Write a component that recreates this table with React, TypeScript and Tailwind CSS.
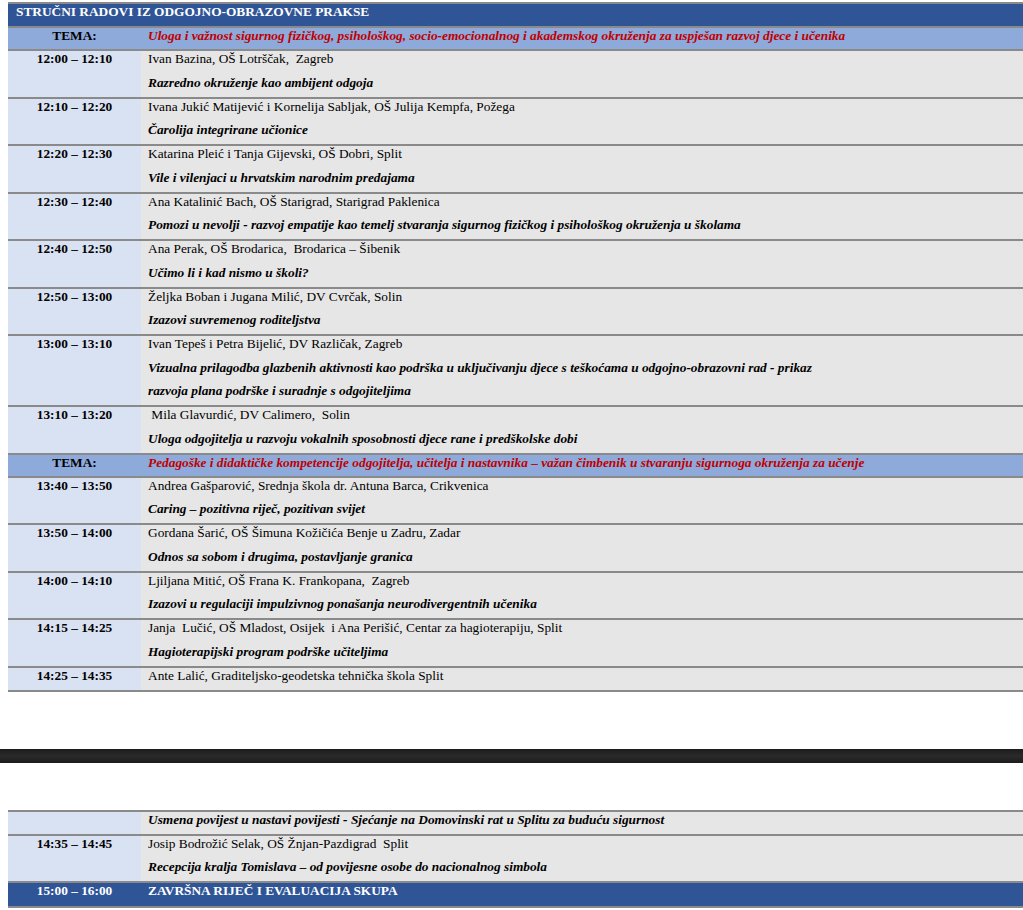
import React from "react";

type Row =
  | { kind: "header"; text: string }
  | { kind: "tema"; text: string }
  | { kind: "entry"; time: string; lines: string[]; titles: string[] }
  | { kind: "final"; time: string; text: string };

const table1: Row[] = [
  { kind: "header", text: "STRUČNI RADOVI IZ ODGOJNO-OBRAZOVNE PRAKSE" },
  {
    kind: "tema",
    text: "Uloga i važnost sigurnog fizičkog, psihološkog, socio-emocionalnog i akademskog okruženja za uspješan razvoj djece i učenika",
  },
  { kind: "entry", time: "12:00 – 12:10", lines: ["Ivan Bazina, OŠ Lotrščak,  Zagreb"], titles: ["Razredno okruženje kao ambijent odgoja"] },
  { kind: "entry", time: "12:10 – 12:20", lines: ["Ivana Jukić Matijević i Kornelija Sabljak, OŠ Julija Kempfa, Požega"], titles: ["Čarolija integrirane učionice"] },
  { kind: "entry", time: "12:20 – 12:30", lines: ["Katarina Pleić i Tanja Gijevski, OŠ Dobri, Split"], titles: ["Vile i vilenjaci u hrvatskim narodnim predajama"] },
  {
    kind: "entry",
    time: "12:30 – 12:40",
    lines: ["Ana Katalinić Bach, OŠ Starigrad, Starigrad Paklenica"],
    titles: ["Pomozi u nevolji - razvoj empatije kao temelj stvaranja sigurnog fizičkog i psihološkog okruženja u školama"],
  },
  { kind: "entry", time: "12:40 – 12:50", lines: ["Ana Perak, OŠ Brodarica,  Brodarica – Šibenik"], titles: ["Učimo li i kad nismo u školi?"] },
  { kind: "entry", time: "12:50 – 13:00", lines: ["Željka Boban i Jugana Milić, DV Cvrčak, Solin"], titles: ["Izazovi suvremenog roditeljstva"] },
  {
    kind: "entry",
    time: "13:00 – 13:10",
    lines: ["Ivan Tepeš i Petra Bijelić, DV Različak, Zagreb"],
    titles: [
      "Vizualna prilagodba glazbenih aktivnosti kao podrška u uključivanju djece s teškoćama u odgojno-obrazovni rad - prikaz",
      "razvoja plana podrške i suradnje s odgojiteljima",
    ],
  },
  {
    kind: "entry",
    time: "13:10 – 13:20",
    lines: [" Mila Glavurdić, DV Calimero,  Solin"],
    titles: ["Uloga odgojitelja u razvoju vokalnih sposobnosti djece rane i predškolske dobi"],
  },
  {
    kind: "tema",
    text: "Pedagoške i didaktičke kompetencije odgojitelja, učitelja i nastavnika – važan čimbenik u stvaranju sigurnoga okruženja za učenje",
  },
  { kind: "entry", time: "13:40 – 13:50", lines: ["Andrea Gašparović, Srednja škola dr. Antuna Barca, Crikvenica"], titles: ["Caring – pozitivna riječ, pozitivan svijet"] },
  { kind: "entry", time: "13:50 – 14:00", lines: ["Gordana Šarić, OŠ Šimuna Kožičića Benje u Zadru, Zadar"], titles: ["Odnos sa sobom i drugima, postavljanje granica"] },
  {
    kind: "entry",
    time: "14:00 – 14:10",
    lines: ["Ljiljana Mitić, OŠ Frana K. Frankopana,  Zagreb"],
    titles: ["Izazovi u regulaciji impulzivnog ponašanja neurodivergentnih učenika"],
  },
  {
    kind: "entry",
    time: "14:15 – 14:25",
    lines: ["Janja  Lučić, OŠ Mladost, Osijek  i Ana Perišić, Centar za hagioterapiju, Split"],
    titles: ["Hagioterapijski program podrške učiteljima"],
  },
  { kind: "entry", time: "14:25 – 14:35", lines: ["Ante Lalić, Graditeljsko-geodetska tehnička škola Split"], titles: [] },
];

const table2: Row[] = [
  { kind: "entry", time: "", lines: [], titles: ["Usmena povijest u nastavi povijesti - Sjećanje na Domovinski rat u Splitu za buduću sigurnost"] },
  {
    kind: "entry",
    time: "14:35 – 14:45",
    lines: ["Josip Bodrožić Selak, OŠ Žnjan-Pazdigrad  Split"],
    titles: ["Recepcija kralja Tomislava – od povijesne osobe do nacionalnog simbola"],
  },
  { kind: "final", time: "15:00 – 16:00", text: "ZAVRŠNA RIJEČ I EVALUACIJA SKUPA" },
];

function RowView({ row }: { row: Row }) {
  if (row.kind === "header") {
    return (
      <div className="border-t-2 border-[#8a8a8a] bg-[#2F5597] pl-2 pb-[6px]">
        <div className="leading-[16px] font-bold text-white whitespace-pre">{row.text}</div>
      </div>
    );
  }
  if (row.kind === "tema") {
    return (
      <div className="flex border-t-2 border-[#8a8a8a] bg-[#8EAADB]">
        <div className="w-[133px] shrink-0 text-center font-bold leading-[16px] pb-[5px]">TEMA:</div>
        <div className="flex-1 pl-[7px] leading-[16px] font-bold italic text-[#C00000] whitespace-pre">{row.text}</div>
      </div>
    );
  }
  if (row.kind === "final") {
    return (
      <div className="flex border-t-2 border-b-2 border-[#8a8a8a] bg-[#2F5597] text-white font-bold">
        <div className="w-[133px] shrink-0 text-center leading-[16px] pb-[7px]">{row.time}</div>
        <div className="flex-1 pl-[7px] leading-[16px] whitespace-pre">{row.text}</div>
      </div>
    );
  }
  return (
    <div className="flex border-t-2 border-[#8a8a8a]">
      <div className="w-[133px] shrink-0 bg-[#D9E2F3] text-center font-bold leading-[16px]">{row.time}</div>
      <div className="flex-1 bg-[#E6E6E6] pl-[7px] flex flex-col gap-[7.5px] pb-[6px]">
        {row.lines.map((l, i) => (
          <div key={"l" + i} className="leading-[16px] whitespace-pre">
            {l}
          </div>
        ))}
        {row.titles.map((t, i) => (
          <div key={"t" + i} className="leading-[16px] font-bold italic whitespace-pre">
            {t}
          </div>
        ))}
      </div>
    </div>
  );
}

export default function App() {
  return (
    <div
      className="w-[1023px] h-[910px] overflow-hidden bg-white text-[13.33px] text-black pt-[2px]"
      style={{ fontFamily: '"Liberation Serif", "Times New Roman", serif' }}
    >
      <div className="ml-[8px] w-[1020px] border-b-2 border-[#8a8a8a]">
        {table1.map((r, i) => (
          <RowView key={i} row={r} />
        ))}
      </div>
      <div className="mt-[57px] h-[14px] w-full bg-gradient-to-b from-[#1c1c1c] via-[#2a2a2a] to-[#1c1c1c]" />
      <div className="mt-[47px] ml-[8px] w-[1020px]">
        {table2.map((r, i) => (
          <RowView key={i} row={r} />
        ))}
      </div>
    </div>
  );
}
